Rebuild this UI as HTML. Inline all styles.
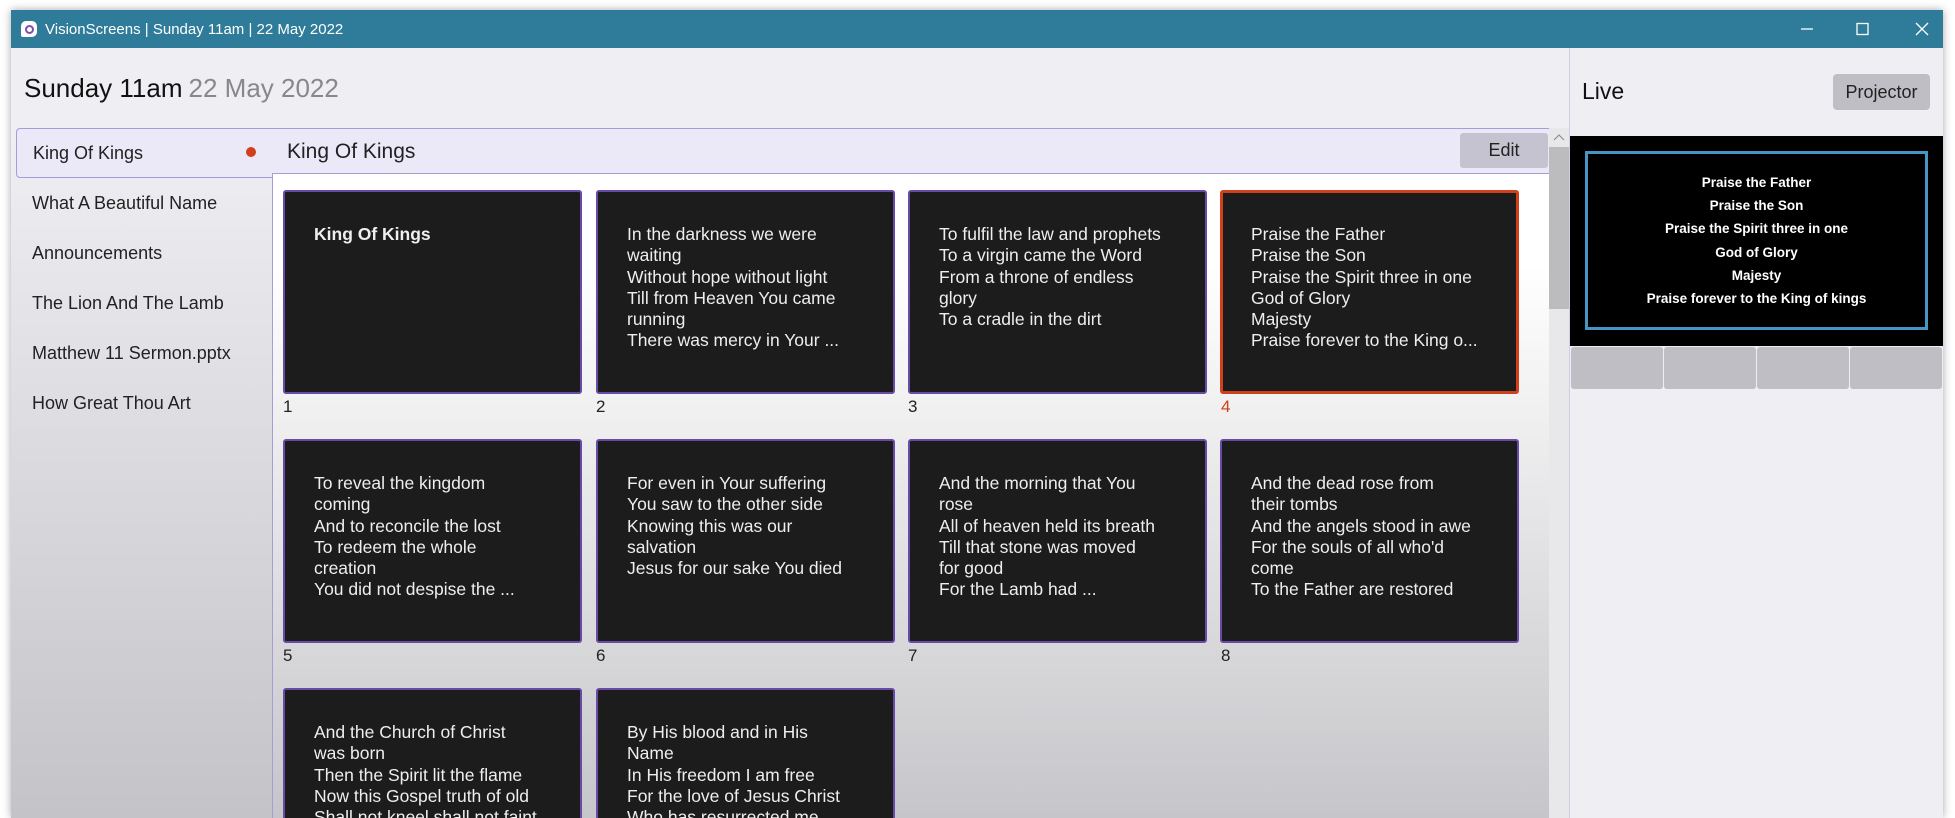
<!DOCTYPE html>
<html><head><meta charset="utf-8"><style>
*{box-sizing:border-box;margin:0;padding:0}
html,body{width:1955px;height:818px;overflow:hidden}
body{background:#fff;font-family:"Liberation Sans",sans-serif;position:relative}
#root{position:absolute;left:0;top:0;width:1955px;height:818px;overflow:hidden}
.win{position:absolute;left:11px;top:10px;width:1932px;height:808px;box-shadow:0 0 8px rgba(0,0,0,.35);background:#efeef3}
.title{position:absolute;left:11px;top:10px;width:1932px;height:38px;background:#2e7c99;color:#fff;font-size:15px}
.title .t{position:absolute;left:34px;top:11px}
.logo{position:absolute;left:10px;top:11px;width:16px;height:16px;border-radius:5px 5px 5px 2px;background:#fff}
.logo:after{content:"";position:absolute;left:4px;top:4px;width:5px;height:5px;border:2px solid #7a4fb0;border-radius:50%}
.leftbg{position:absolute;left:11px;top:48px;width:1558px;height:770px;background:linear-gradient(#efeef3 0%,#efeef3 12%,#c4c4c8 100%)}
h1{position:absolute;left:24px;top:73px;font-size:26px;font-weight:normal;color:#111}
h1 span{color:#888;margin-left:6px}
.list{position:absolute;left:16px;top:128px;width:256px;font-size:18px;color:#222}
.it{height:50px;line-height:50px;padding-left:16px}
.it.sel{background:#ebe8f8;border:1px solid #a99ad8;border-right:none;border-radius:4px 0 0 4px;line-height:48px;position:relative}
.dot{position:absolute;left:229px;top:18px;width:10px;height:10px;border-radius:50%;background:#d0401a}
.main{position:absolute;left:272px;top:128px;width:1277px;height:690px;background:linear-gradient(#fff 0%,#fff 20%,#c6c6ca 100%);border-left:1px solid #a99ad8}
.hdr{position:absolute;left:272px;top:128px;width:1277px;height:46px;background:#ebe8f8;border-top:1px solid #a99ad8;border-bottom:1px solid #a99ad8;font-size:21px;color:#222;padding:11px 0 0 15px}
.edit{position:absolute;left:1460px;top:133px;width:88px;height:35px;background:#c5c3cf;border-radius:3px;font-size:18px;text-align:center;line-height:35px;color:#222}
.card{position:absolute;width:299px;height:204px;background:#1c1c1c;border:2px solid #6a4aa8;border-radius:3px;color:#eee;font-size:17.5px;line-height:21.3px;padding:32px 0 0 29px;white-space:nowrap;overflow:hidden}
.card.o{border:3px solid #d0401a;padding:31px 0 0 28px}
.num{position:absolute;font-size:17px;color:#222}
.sb{position:absolute;left:1549px;top:128px;width:20px;height:690px;background:#e8e8ea}
.th{position:absolute;left:0;top:19px;width:20px;height:162px;background:#bcbcbe}
.right{position:absolute;left:1569px;top:48px;width:374px;height:770px;background:#efeef3;border-left:1px solid #d0cce4}
.live{position:absolute;left:1582px;top:78px;font-size:23px;color:#111}
.proj{position:absolute;left:1833px;top:74px;width:97px;height:36px;background:#bfbec4;border-radius:4px;font-size:18px;line-height:36px;text-align:center;color:#222}
.prev{position:absolute;left:1570px;top:136px;width:373px;height:210px;background:#000}
.box{position:absolute;left:15px;top:15px;width:343px;height:179px;border:3px solid #4795c4;color:#fff;font-weight:bold;font-size:13.5px;text-align:center;line-height:23.2px;padding-top:17px}
.bt{position:absolute;top:347px;width:92px;height:42px;background:#bfbec4;border-radius:3px}
</style></head><body><div id="root">
<div class="win"></div>
<div class="title"><div class="logo"></div><div class="t">VisionScreens | Sunday 11am | 22 May 2022</div>
<svg style="position:absolute;left:1780px;top:11px" width="150" height="16"><line x1="10" y1="8" x2="22" y2="8" stroke="#fff" stroke-width="1.3"/><rect x="66" y="2.5" width="11" height="11" fill="none" stroke="#fff" stroke-width="1.3"/><path d="M125 2L137 14M137 2L125 14" stroke="#fff" stroke-width="1.3"/></svg></div>
<div class="leftbg"></div>
<h1>Sunday 11am<span>22 May 2022</span></h1>
<div class="list">
<div class="it sel">King Of Kings<div class="dot"></div></div>
<div class="it">What A Beautiful Name</div>
<div class="it">Announcements</div>
<div class="it">The Lion And The Lamb</div>
<div class="it">Matthew 11 Sermon.pptx</div>
<div class="it">How Great Thou Art</div>
</div>
<div class="main"></div>
<div class="hdr">King Of Kings</div>
<div class="edit">Edit</div>

<div class="card" style="left:283px;top:190px"><b>King Of Kings</b></div><div class="num" style="left:283px;top:397px">1</div>
<div class="card" style="left:596px;top:190px">In the darkness we were<br>waiting<br>Without hope without light<br>Till from Heaven You came<br>running<br>There was mercy in Your ...</div><div class="num" style="left:596px;top:397px">2</div>
<div class="card" style="left:908px;top:190px">To fulfil the law and prophets<br>To a virgin came the Word<br>From a throne of endless<br>glory<br>To a cradle in the dirt</div><div class="num" style="left:908px;top:397px">3</div>
<div class="card o" style="left:1220px;top:190px">Praise the Father<br>Praise the Son<br>Praise the Spirit three in one<br>God of Glory<br>Majesty<br>Praise forever to the King o...</div><div class="num" style="left:1221px;top:397px;color:#d0401a">4</div>

<div class="card" style="left:283px;top:439px">To reveal the kingdom<br>coming<br>And to reconcile the lost<br>To redeem the whole<br>creation<br>You did not despise the ...</div><div class="num" style="left:283px;top:646px">5</div>
<div class="card" style="left:596px;top:439px">For even in Your suffering<br>You saw to the other side<br>Knowing this was our<br>salvation<br>Jesus for our sake You died</div><div class="num" style="left:596px;top:646px">6</div>
<div class="card" style="left:908px;top:439px">And the morning that You<br>rose<br>All of heaven held its breath<br>Till that stone was moved<br>for good<br>For the Lamb had ...</div><div class="num" style="left:908px;top:646px">7</div>
<div class="card" style="left:1220px;top:439px">And the dead rose from<br>their tombs<br>And the angels stood in awe<br>For the souls of all who'd<br>come<br>To the Father are restored</div><div class="num" style="left:1221px;top:646px">8</div>

<div class="card" style="left:283px;top:688px">And the Church of Christ<br>was born<br>Then the Spirit lit the flame<br>Now this Gospel truth of old<br>Shall not kneel shall not faint</div>
<div class="card" style="left:596px;top:688px">By His blood and in His<br>Name<br>In His freedom I am free<br>For the love of Jesus Christ<br>Who has resurrected me</div>

<div class="sb"><svg width="20" height="20"><path d="M5 12L10 7L15 12" fill="none" stroke="#888" stroke-width="1"/></svg><div class="th"></div></div>
<div class="right"></div>
<div class="live">Live</div><div class="proj">Projector</div>
<div class="prev"><div class="box">Praise the Father<br>Praise the Son<br>Praise the Spirit three in one<br>God of Glory<br>Majesty<br>Praise forever to the King of kings</div></div>
<div class="bt" style="left:1571px"></div><div class="bt" style="left:1664px"></div><div class="bt" style="left:1757px"></div><div class="bt" style="left:1850px"></div>
</div></body></html>
